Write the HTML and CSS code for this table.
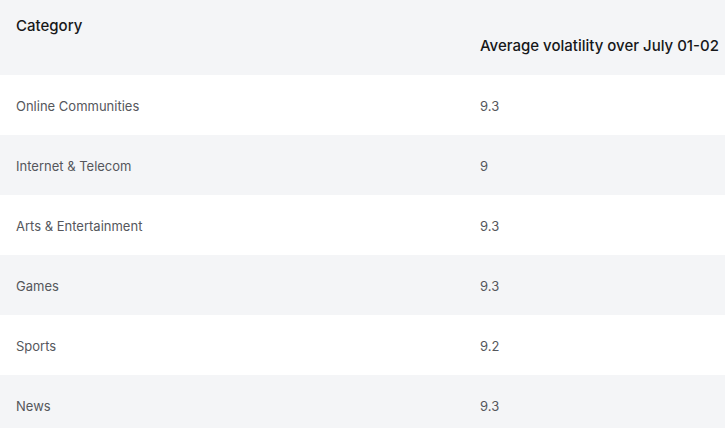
FILE: index.html
```html
<!DOCTYPE html>
<html>
<head>
<meta charset="utf-8">
<link rel="stylesheet" href="styles.css">
</head>
<body>
<table class="vol-table">
  <thead>
    <tr>
      <th class="col-cat">Category</th>
      <th class="col-val">Average volatility over July 01-02</th>
    </tr>
  </thead>
  <tbody>
    <tr><td>Online Communities</td><td>9.3</td></tr>
    <tr><td>Internet &amp; Telecom</td><td>9</td></tr>
    <tr><td>Arts &amp; Entertainment</td><td>9.3</td></tr>
    <tr><td>Games</td><td>9.3</td></tr>
    <tr><td>Sports</td><td>9.2</td></tr>
    <tr><td>News</td><td>9.3</td></tr>
  </tbody>
</table>
</body>
</html>
```
FILE: styles.css
```css
html, body {
  margin: 0;
  padding: 0;
  background: #fff;
}
.vol-table {
  width: 725px;
  border-collapse: collapse;
  font-family: Inter, "Noto Sans", sans-serif;
  table-layout: fixed;
}
.vol-table th {
  background: #f4f5f7;
  color: #17181a;
  font-size: 15px;
  font-weight: 500;
  text-align: left;
  height: 75px;
  padding: 0 0 0 16px;
  box-sizing: border-box;
  white-space: nowrap;
}
.vol-table .col-cat {
  width: 464px;
  vertical-align: top;
  padding-top: 16px;
}
.vol-table .col-val {
  vertical-align: bottom;
  padding-bottom: 20px;
}
.vol-table td {
  height: 60px;
  padding: 1px 16px 0;
  font-size: 13px;
  color: #55575c;
  vertical-align: middle;
  box-sizing: border-box;
}
.vol-table tbody tr:nth-child(even) td {
  background: #f4f5f7;
}
```
